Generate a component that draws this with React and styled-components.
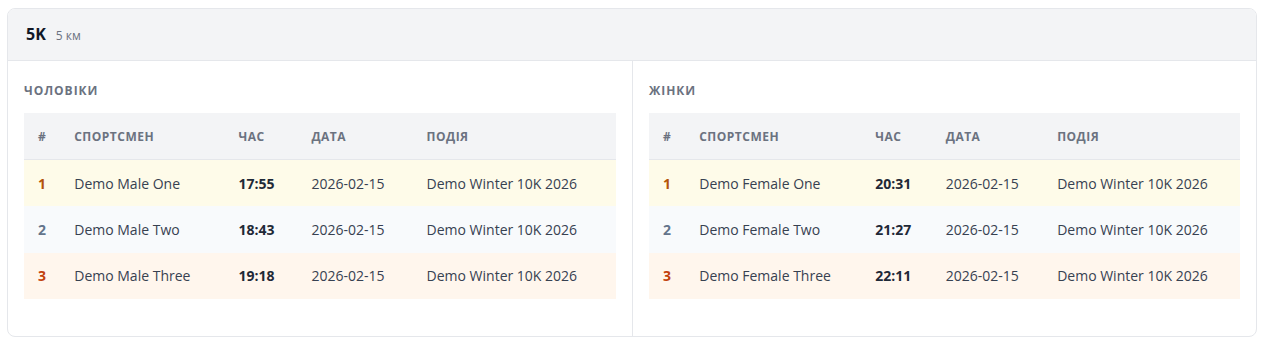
import styled, { createGlobalStyle } from 'styled-components'

const GlobalStyle = createGlobalStyle`
  body {
    margin: 0;
    padding: 8px 13px 8px 7px;
    background: #ffffff;
    font-family: 'Open Sans', 'Noto Sans', sans-serif;
    color: #374151;
  }
`

const Card = styled.section`
  border: 1px solid #e5e7eb;
  border-radius: 8px;
  overflow: hidden;
  background: #ffffff;
`

const CardHeader = styled.header`
  display: flex;
  align-items: baseline;
  gap: 10px;
  height: 52px;
  box-sizing: border-box;
  padding: 14px 18px 0;
  background: #f3f4f6;
  border-bottom: 1px solid #e5e7eb;
`

const Distance = styled.h2`
  margin: 0;
  font-size: 16px;
  font-weight: 700;
  color: #111827;
`

const DistanceNote = styled.span`
  font-size: 12px;
  color: #6b7280;
`

const Columns = styled.div`
  display: grid;
  grid-template-columns: 1fr 1fr;
`

const Column = styled.div`
  padding: 21px 16px 37px;
  border-left: ${({ $divider }) => ($divider ? '1px solid #e5e7eb' : 'none')};
`

const GroupTitle = styled.h3`
  margin: 0 0 13px;
  font-size: 12px;
  line-height: 18px;
  font-weight: 700;
  letter-spacing: 0.08em;
  text-transform: uppercase;
  color: #6b7280;
`

const Table = styled.table`
  width: 100%;
  border-collapse: collapse;
  font-size: 14px;
`

const HeadCell = styled.th`
  height: 46px;
  width: ${({ $narrow }) => ($narrow ? '1%' : 'auto')};
  padding: 0 14px;
  text-align: left;
  font-size: 12px;
  font-weight: 700;
  letter-spacing: 0.04em;
  text-transform: uppercase;
  color: #6b7280;
  background: #f3f4f6;
  border-bottom: 1px solid #e5e7eb;
  white-space: nowrap;
`

const rowBg = { 1: '#fefbe9', 2: '#f8fafc', 3: '#fff6ed' }
const rankColor = { 1: '#b45309', 2: '#64748b', 3: '#c2410c' }

const Row = styled.tr`
  background: ${({ $rank }) => rowBg[$rank]};
  & + & td {
    border-top: 1px solid #eef0f3;
  }
`

const Cell = styled.td`
  height: 46.4px;
  padding: 0 14px;
  color: #374151;
  white-space: nowrap;
`

const RankCell = styled(Cell)`
  font-weight: 700;
  color: ${({ $rank }) => rankColor[$rank]};
`

const TimeCell = styled(Cell)`
  font-weight: 700;
  color: #1f2937;
`

const groups = [
  {
    title: 'Чоловіки',
    rows: [
      ['Demo Male One', '17:55'],
      ['Demo Male Two', '18:43'],
      ['Demo Male Three', '19:18'],
    ],
  },
  {
    title: 'Жінки',
    rows: [
      ['Demo Female One', '20:31'],
      ['Demo Female Two', '21:27'],
      ['Demo Female Three', '22:11'],
    ],
  },
]

const ResultsTable = ({ rows }) => (
  <Table>
    <thead>
      <tr>
        <HeadCell $narrow>#</HeadCell>
        <HeadCell>Спортсмен</HeadCell>
        <HeadCell>Час</HeadCell>
        <HeadCell>Дата</HeadCell>
        <HeadCell>Подія</HeadCell>
      </tr>
    </thead>
    <tbody>
      {rows.map(([name, time], i) => (
        <Row key={name} $rank={i + 1}>
          <RankCell $rank={i + 1}>{i + 1}</RankCell>
          <Cell>{name}</Cell>
          <TimeCell>{time}</TimeCell>
          <Cell>2026-02-15</Cell>
          <Cell>Demo Winter 10K 2026</Cell>
        </Row>
      ))}
    </tbody>
  </Table>
)

const App = () => (
  <>
    <GlobalStyle />
    <Card>
      <CardHeader>
        <Distance>5K</Distance>
        <DistanceNote>5 км</DistanceNote>
      </CardHeader>
      <Columns>
        {groups.map((g, i) => (
          <Column key={g.title} $divider={i > 0}>
            <GroupTitle>{g.title}</GroupTitle>
            <ResultsTable rows={g.rows} />
          </Column>
        ))}
      </Columns>
    </Card>
  </>
)

export default App
